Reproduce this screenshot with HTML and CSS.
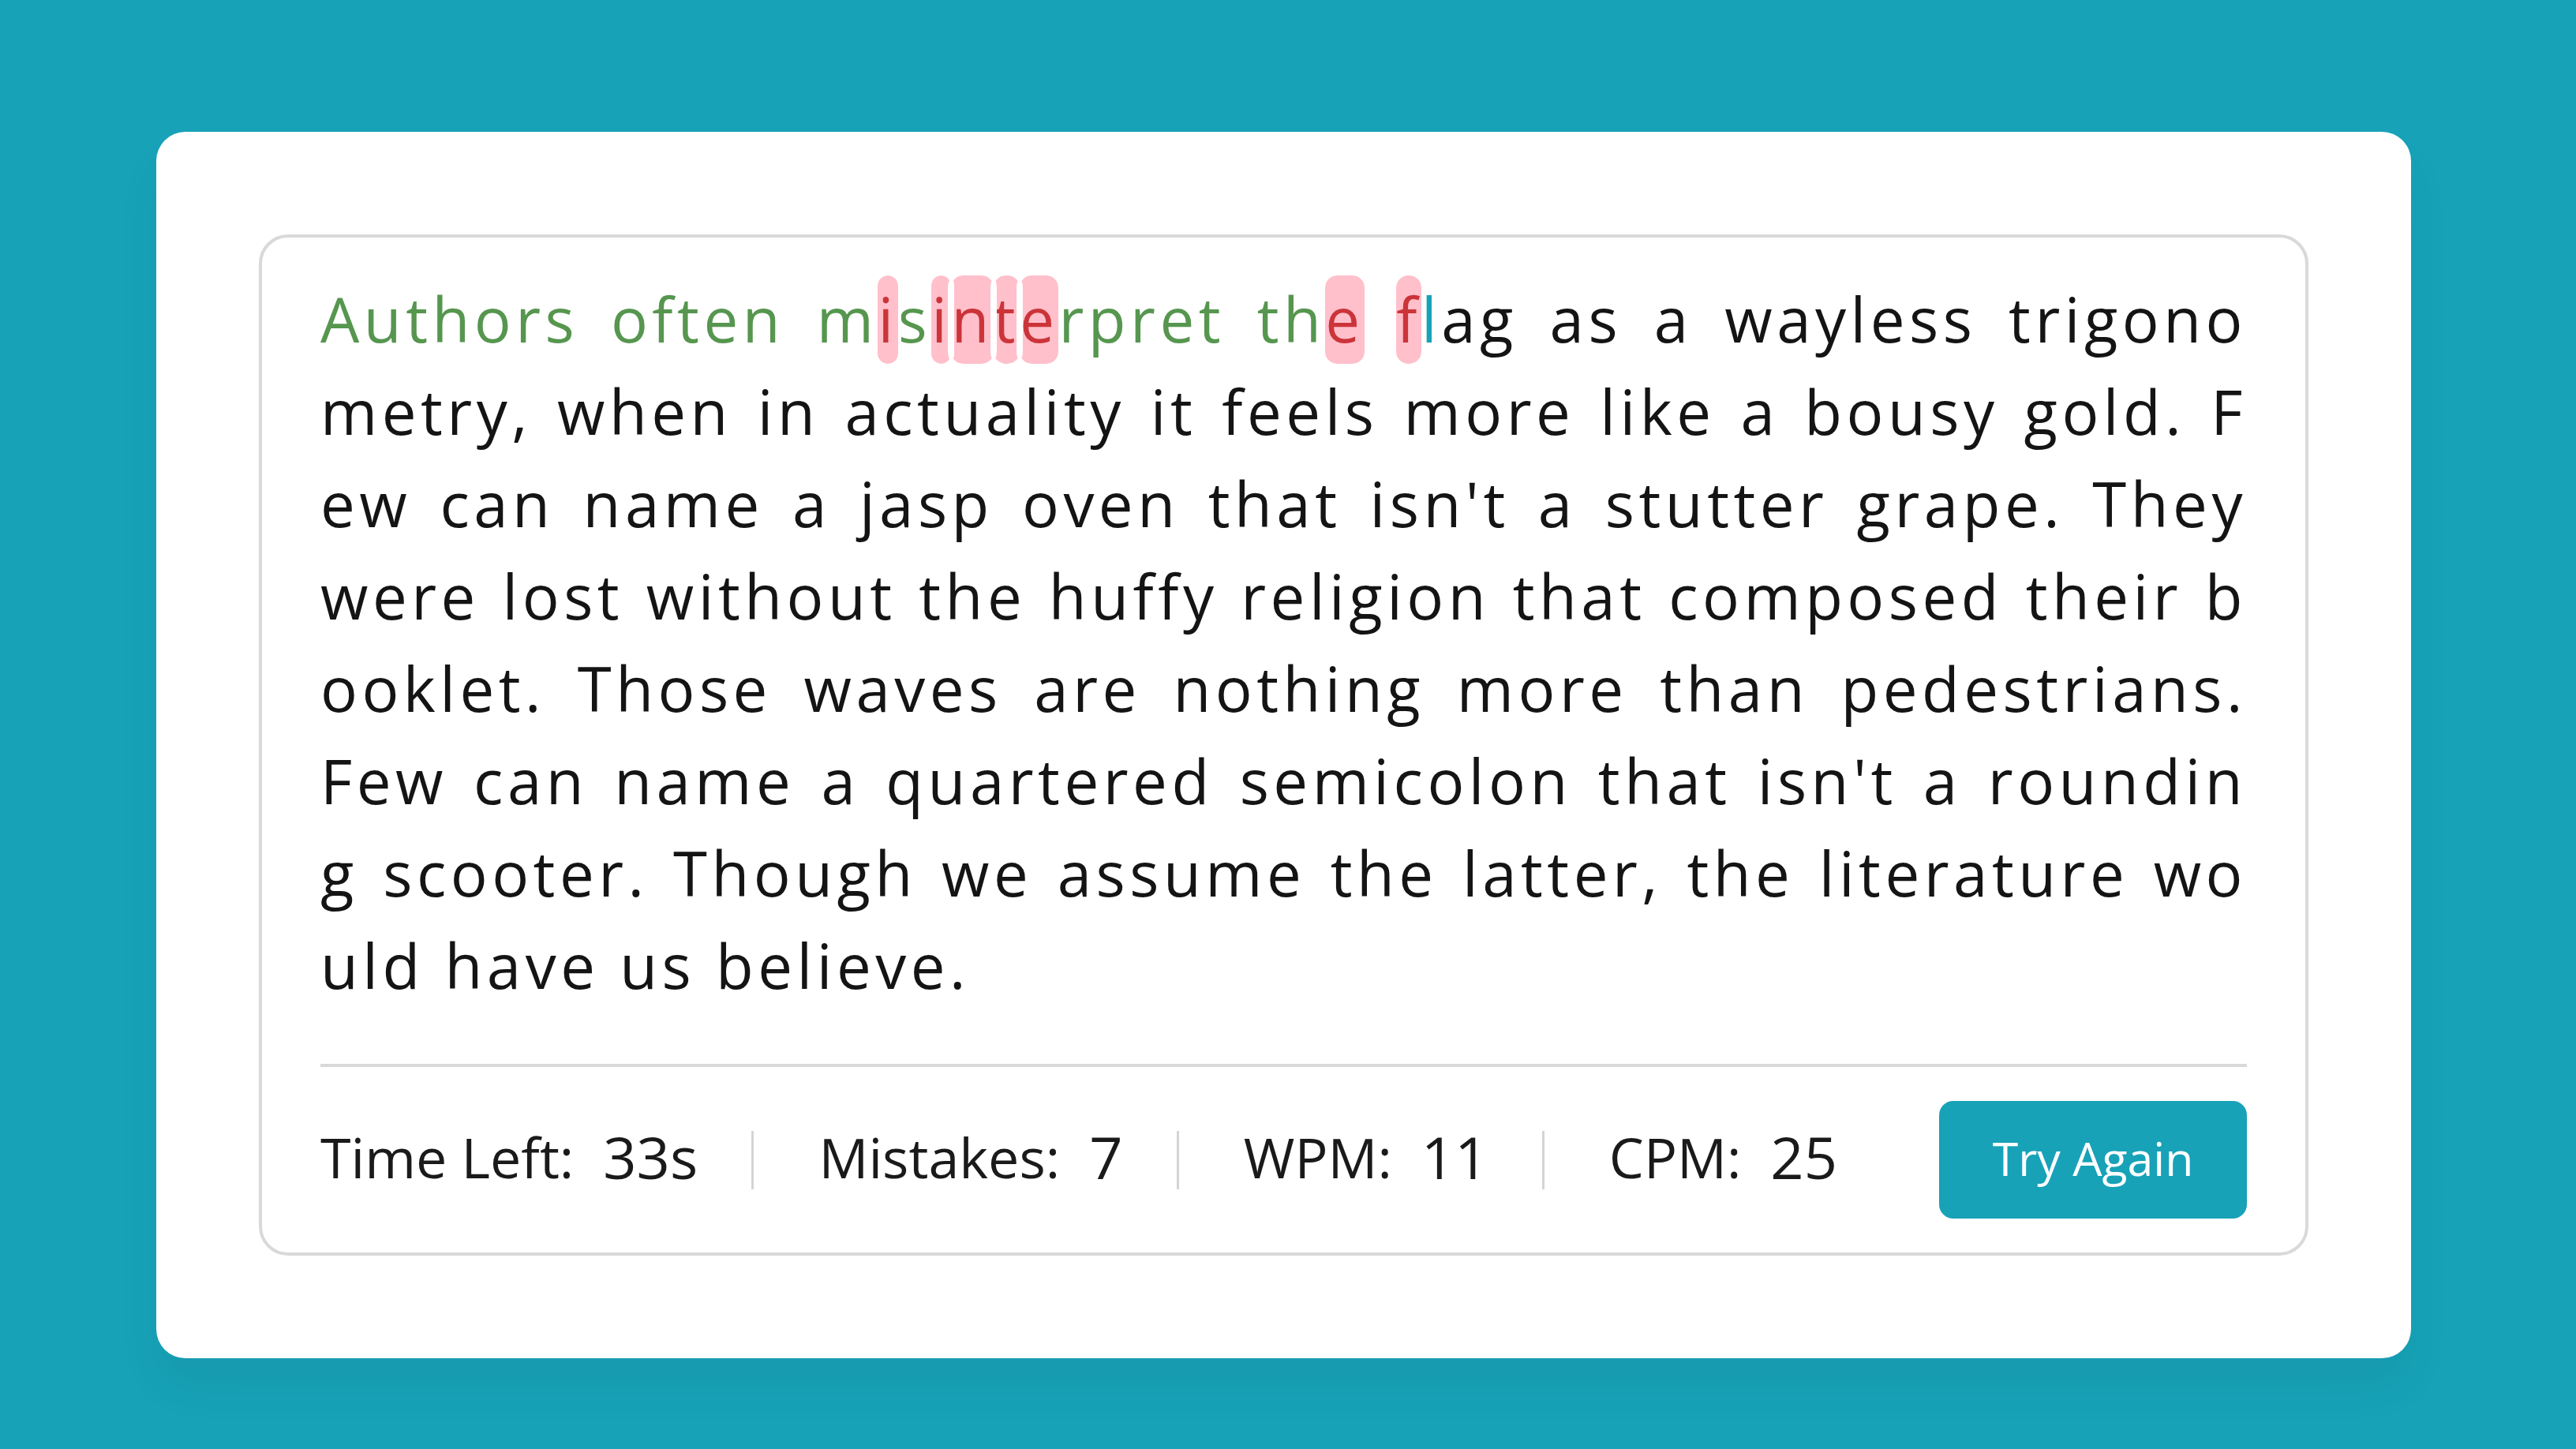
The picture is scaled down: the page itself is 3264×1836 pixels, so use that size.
FILE: index.html
```html
<!DOCTYPE html>
<html lang="en">
<head>
<meta charset="utf-8">
<title>Typing Speed Test</title>
<link rel="stylesheet" href="styles.css">
</head>
<body>
<div class="wrapper">
  <div class="content-box">
    <div class="typing-text">
      <p>
        <span class="line"><span class="correct">Authors often m</span><span class="incorrect">i</span><span class="correct">s</span><span class="incorrect">i</span><span class="incorrect">n</span><span class="incorrect">t</span><span class="incorrect">e</span><span class="correct">rpret th</span><span class="incorrect">e</span><span class="correct"> </span><span class="incorrect">f</span><span class="active">l</span>ag as a wayless trigono</span>
        <span class="line">metry, when in actuality it feels more like a bousy gold. F</span>
        <span class="line">ew can name a jasp oven that isn't a stutter grape. They</span>
        <span class="line">were lost without the huffy religion that composed their b</span>
        <span class="line">ooklet. Those waves are nothing more than pedestrians.</span>
        <span class="line">Few can name a quartered semicolon that isn't a roundin</span>
        <span class="line">g scooter. Though we assume the latter, the literature wo</span>
        <span class="line last">uld have us believe.</span>
      </p>
    </div>
    <div class="content">
      <ul class="result-details">
        <li class="time"><p>Time Left:</p><span><b>33</b>s</span></li>
        <li class="mistake"><p>Mistakes:</p><span>7</span></li>
        <li class="wpm"><p>WPM:</p><span>11</span></li>
        <li class="cpm"><p>CPM:</p><span>25</span></li>
      </ul>
      <button class="try-again">Try Again</button>
    </div>
  </div>
</div>
</body>
</html>
```

FILE: styles.css
```css
* {
  box-sizing: border-box;
}

body {
  margin: 0;
  min-height: 100vh;
  background: #17a2b8;
  display: flex;
  justify-content: center;
  align-items: flex-start;
  padding: 167px 11px 0 0;
  font-family: "Open Sans", "Noto Sans", sans-serif;
  color: #1a1a1a;
}

.wrapper {
  width: 2857px;
  padding: 130px;
  background: #fff;
  border-radius: 37px;
  box-shadow: 0 37px 56px rgba(0, 0, 0, 0.05);
}

.content-box {
  padding: 45px 74px 0;
  border-radius: 37px;
  border: 4px solid #d9d9d9;
}

.typing-text p {
  margin: 0;
  font-size: 78px;
  line-height: 117px;
  letter-spacing: 5.5px;
  color: #141414;
}

.typing-text .line {
  display: block;
  text-align: justify;
  text-align-last: justify;
}

.typing-text .line.last {
  text-align-last: left;
}

.typing-text .correct {
  color: #56964f;
}

.typing-text .incorrect {
  color: #cb3439;
  background: #ffc0cb;
  border-radius: 15px;
  outline: 4px solid #fff;
  padding: 2px 0 4px;
}

.typing-text .active {
  color: #17a2b8;
}

.content {
  margin-top: 66px;
  display: flex;
  padding: 43px 0;
  align-items: center;
  justify-content: space-between;
  border-top: 4px solid #d9d9d9;
}

.result-details {
  display: flex;
  align-items: center;
  justify-content: space-between;
  width: 1922px;
  margin: 0;
  padding: 0;
  list-style: none;
}

.result-details li {
  display: flex;
  align-items: center;
  height: 74px;
}

.result-details li + li {
  padding-left: 82px;
  border-left: 3px solid #d4d4d4;
}

.result-details li p {
  margin: 0 0 8px;
  font-size: 70px;
}

.result-details li span {
  display: block;
  margin: 0 0 8px 37px;
  font-size: 74px;
  font-weight: 500;
}

.result-details li span b {
  font-weight: 500;
}

.try-again {
  width: 390px;
  padding: 30px 0;
  border: none;
  border-radius: 18px;
  background: #17a2b8;
  color: #fff;
  font-family: inherit;
  font-size: 59px;
  line-height: 85px;
  padding-bottom: 34px;
}
```
